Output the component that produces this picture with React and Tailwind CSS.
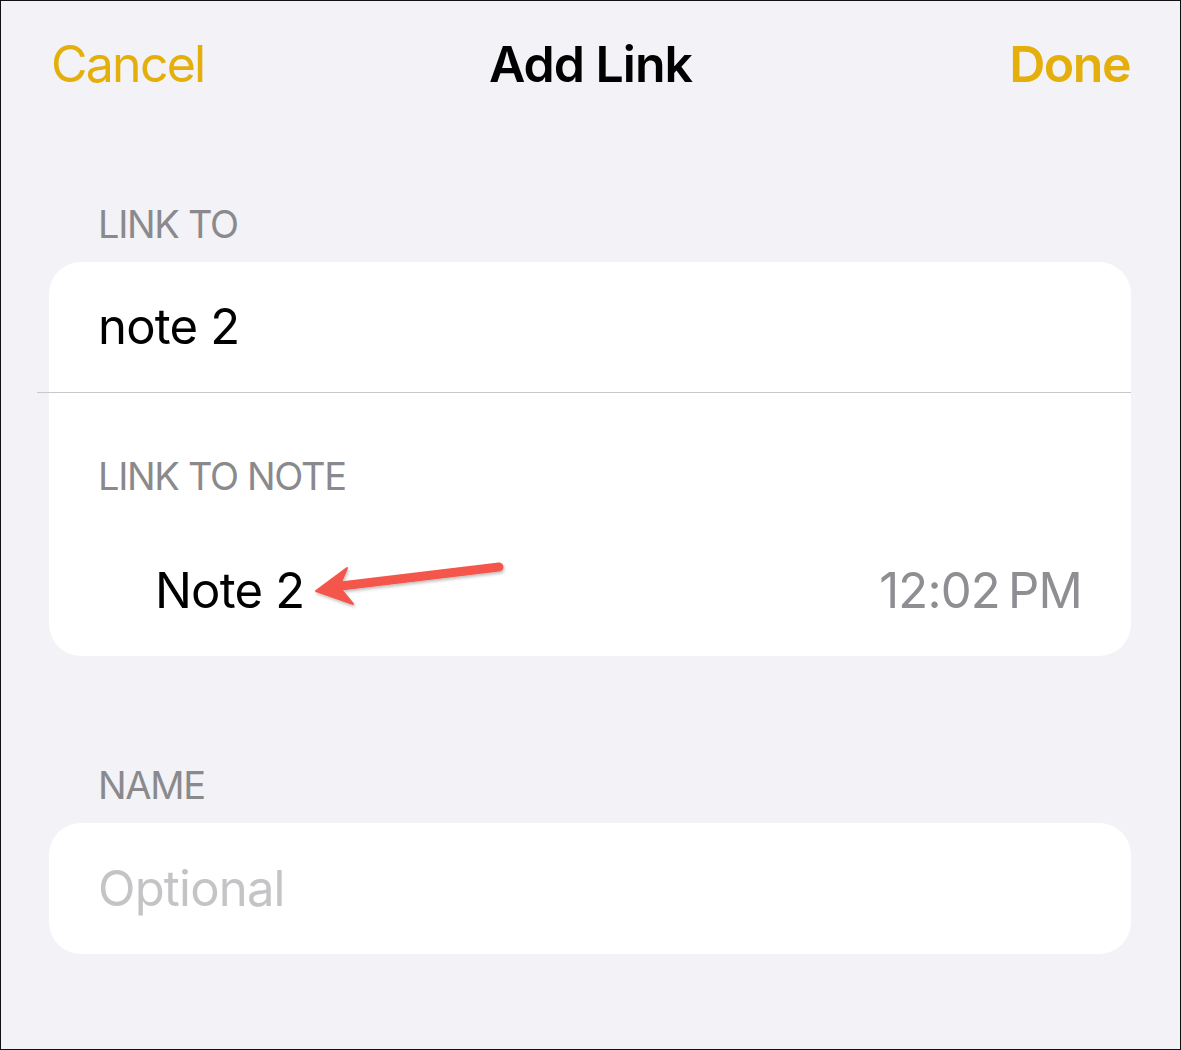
import React from "react";

const font = { fontFamily: "Inter, 'Liberation Sans', sans-serif" };

const Arrow = () => (
    <svg
        className="absolute left-0 top-0 pointer-events-none"
        width="1181"
        height="1050"
        viewBox="0 0 1181 1050"
    >
        <defs>
            <filter id="sh" x="-10%" y="-50%" width="120%" height="200%">
                <feDropShadow dx="1" dy="2" stdDeviation="1.5" floodColor="#000" floodOpacity="0.25" />
            </filter>
        </defs>
        <g filter="url(#sh)" fill="#f4574b" stroke="#f4574b">
            <line x1="498" y1="566" x2="340" y2="585" strokeWidth="9" strokeLinecap="round" />
            <path d="M315 590 L346 567 L338 586 L352 603 Z" strokeWidth="2" strokeLinejoin="round" />
        </g>
    </svg>
);

export default function App() {
    return (
        <div
            className="relative w-[1181px] h-[1050px] bg-[#f2f2f7] border border-[#111] overflow-hidden tracking-[-0.05em]"
            style={font}
        >
            {/* Nav bar */}
            <div className="grid grid-cols-3 items-center h-[126px] px-[50px]">
                <span className="justify-self-start text-[50px] leading-none text-[#e4af0a] tracking-[-0.035em]">Cancel</span>
                <span className="justify-self-center text-[50px] leading-none font-semibold text-black tracking-[-0.02em]">Add Link</span>
                <span className="justify-self-end text-[50px] leading-none font-semibold text-[#e4af0a] tracking-[-0.03em]">Done</span>
            </div>

            {/* LINK TO */}
            <div className="mt-[78px] px-[97px] text-[38px] leading-none text-[#8a8a8e] tracking-[-0.035em]">LINK TO</div>
            <div className="mt-[19px] ml-[48px] mr-[49px] pb-[5px] bg-white rounded-[32px]">
                <div className="h-[130px] flex items-center px-[49px] text-[49px] text-black">note 2</div>
                <div className="h-px bg-[#c8c8cc] -ml-[12px]" />
                <div className="px-[49px] pt-[64px] text-[38px] leading-none text-[#8a8a8e] tracking-[-0.035em]">LINK TO NOTE</div>
                <div className="h-[120px] mt-[36px] flex items-center justify-between pl-[106px] pr-[49px]">
                    <span className="text-[49px] text-black">Note 2</span>
                    <span className="text-[49px] text-[#8e8e93]">12:02{"\u2009"}PM</span>
                </div>
            </div>

            {/* NAME */}
            <div className="mt-[110px] px-[97px] text-[38px] leading-none text-[#8a8a8e] tracking-[-0.035em]">NAME</div>
            <div className="mt-[19px] ml-[48px] mr-[49px] bg-white rounded-[32px] h-[131px] flex items-center px-[49px]">
                <span className="text-[49px] text-[#c4c4c7]">Optional</span>
            </div>

            <Arrow />
        </div>
    );
}
